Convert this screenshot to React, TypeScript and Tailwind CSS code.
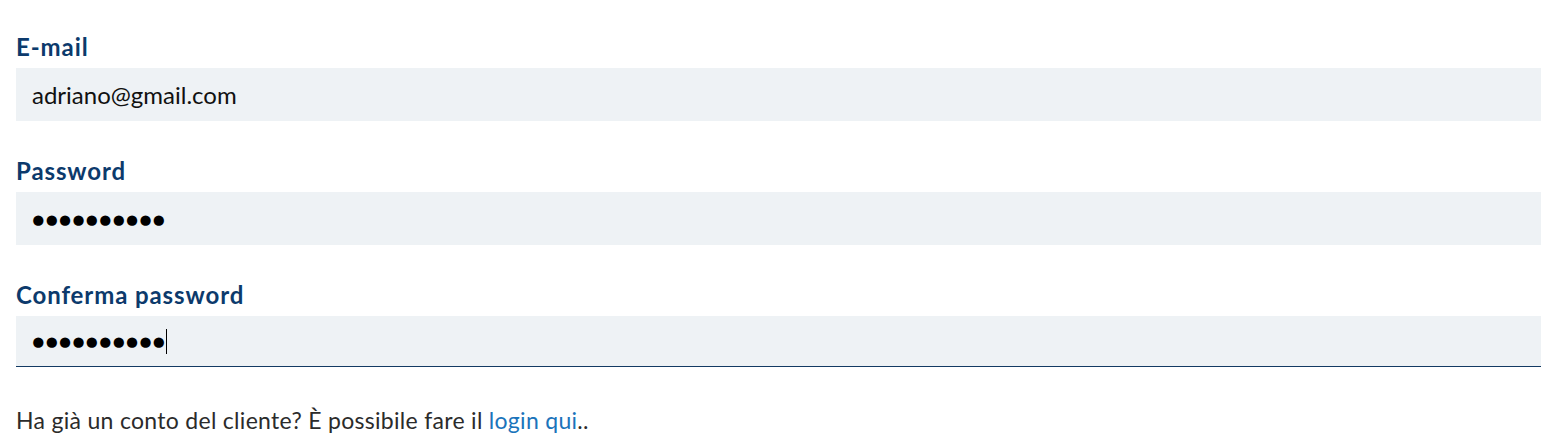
import React from 'react'

const fields = [
  { label: 'E-mail', value: 'adriano@gmail.com', secret: false, focused: false },
  { label: 'Password', value: '●●●●●●●●●●', secret: true, focused: false },
  { label: 'Conferma password', value: '●●●●●●●●●●', secret: true, focused: true },
]

const App = () => {
  return (
    <div className="min-h-screen bg-white pl-4 pr-[21px] pt-[32px] font-['Lato',sans-serif]">
      <form className="flex flex-col gap-[35px]">
        {fields.map((f, i) => (
          <div key={i} className="flex flex-col">
            <label className="mb-[6px] text-[24px] font-bold leading-[30px] tracking-[0.9px] text-[#0c3a6c]">{f.label}</label>
            <div
              className={
                'flex items-center bg-[#eef2f5] px-4 text-[24px] text-[#111] ' +
                (f.focused ? 'h-[51px] border-b border-[#133a63]' : 'h-[53px]')
              }
            >
              {f.secret ? (
                <span className="text-[21px] tracking-[0.8px] text-black">{f.value}</span>
              ) : (
                <span>{f.value}</span>
              )}
              {f.focused && <span className="h-[25px] w-px bg-black" />}
            </div>
          </div>
        ))}
      </form>
      <p className="mt-[37px] text-[23px] leading-[32px] tracking-[0.3px] text-[#2b2b2b]">
        Ha già un conto del cliente? È possibile fare il{' '}
        <a href="#" className="text-[#1b74bb]">login qui</a>..
      </p>
    </div>
  )
}

export default App
